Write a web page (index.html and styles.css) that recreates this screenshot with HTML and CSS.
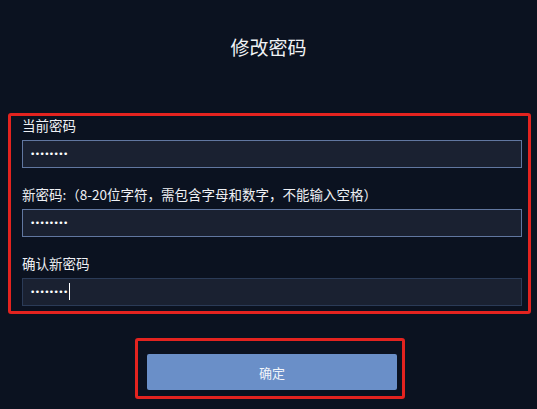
FILE: index.html
```html
<!DOCTYPE html>
<html lang="zh-CN">
<head>
<meta charset="utf-8">
<title>修改密码</title>
<link rel="stylesheet" href="styles.css">
</head>
<body>
<div class="page">
  <h1 class="title">修改密码</h1>
  <form class="form-box">
    <div class="field">
      <label class="label">当前密码</label>
      <input class="input" type="password" value="12345678">
    </div>
    <div class="field">
      <label class="label">新密码:（8-20位字符，需包含字母和数字，不能输入空格）</label>
      <input class="input" type="password" value="12345678">
    </div>
    <div class="field">
      <label class="label">确认新密码</label>
      <div class="input-wrap caret">
        <input class="input input-focus" type="password" value="12345678">
      </div>
    </div>
  </form>
  <div class="btn-box">
    <button class="btn" type="button">确定</button>
  </div>
</div>
</body>
</html>
```
FILE: styles.css
```css
html, body {
  margin: 0;
  padding: 0;
  background: #0b1220;
  height: 100%;
  overflow: hidden;
}
body {
  font-family: "Noto Sans CJK SC", "Noto Sans", sans-serif;
  color: #e9ecf1;
}
.page {
  display: flex;
  flex-direction: column;
  align-items: center;
}
.title {
  margin: 0;
  padding-top: 33px;
  height: 80px;
  box-sizing: border-box;
  font-size: 19px;
  line-height: 27px;
  font-weight: 400;
  color: #f0f2f5;
  text-align: center;
  width: 100%;
}
.form-box {
  box-sizing: border-box;
  margin: 33px 0 0 8px;
  align-self: flex-start;
  width: 523px;
  border: 3px solid #e3231f;
  border-radius: 3px;
  padding: 0 6px 5px 11px;
  display: flex;
  flex-direction: column;
  gap: 17px;
}
.field {
  display: flex;
  flex-direction: column;
}
.label {
  font-size: 13.5px;
  line-height: 18px;
  margin-bottom: 6px;
  color: #eef0f4;
}
.input-wrap {
  position: relative;
}
.caret::after {
  content: "";
  position: absolute;
  left: 47px;
  top: 5px;
  width: 1px;
  height: 17px;
  background: #ffffff;
}
.input {
  display: block;
  box-sizing: border-box;
  height: 28px;
  width: 100%;
  margin: 0;
  background: #1a2131;
  border: 1px solid #6177a0;
  border-radius: 0;
  padding: 0 7px;
  color: #ffffff;
  font-family: "DejaVu Sans", sans-serif;
  font-size: 9px;
  letter-spacing: -0.6px;
  outline: none;
}
.input-focus {
  border-color: #2b3b57;
}
.btn-box {
  box-sizing: border-box;
  margin: 24px 0 0 135px;
  align-self: flex-start;
  width: 270px;
  height: 61px;
  border: 3px solid #e3231f;
  border-radius: 3px;
  padding: 13px 5px 6px 9px;
  display: flex;
}
.btn {
  flex: 1;
  height: 36px;
  background: #6a8fc8;
  border: none;
  border-radius: 2px;
  color: #f2f5fa;
  font-family: "Noto Sans CJK SC", sans-serif;
  font-size: 13px;
  cursor: pointer;
}
```
